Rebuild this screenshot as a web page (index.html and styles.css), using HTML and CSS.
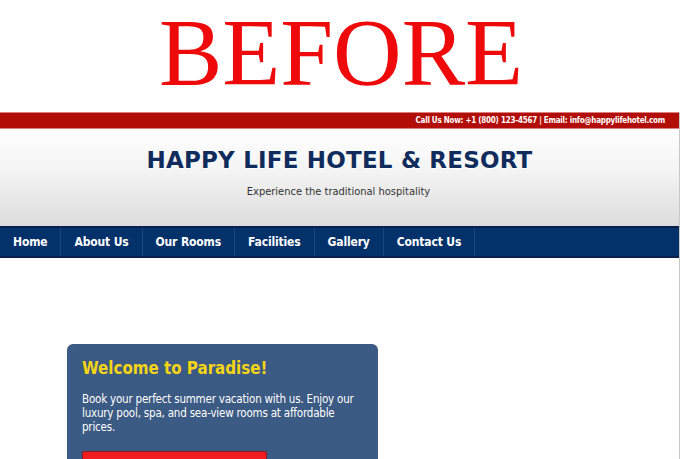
FILE: index.html
```html
<!DOCTYPE html>
<html>
<head>
<meta charset="utf-8">
<link rel="stylesheet" href="styles.css">
</head>
<body>
<div class="banner">BEFORE</div>
<div class="site">
  <div class="topbar">Call Us Now: +1 (800) 123-4567 | Email: info@happylifehotel.com</div>
  <header class="header">
    <h1 class="title">HAPPY LIFE HOTEL &amp; RESORT</h1>
    <p class="tagline">Experience the traditional hospitality</p>
  </header>
  <nav class="nav">
    <a class="nav-item">Home</a>
    <a class="nav-item">About Us</a>
    <a class="nav-item">Our Rooms</a>
    <a class="nav-item">Facilities</a>
    <a class="nav-item">Gallery</a>
    <a class="nav-item">Contact Us</a>
  </nav>
  <main class="content">
    <section class="card">
      <h2 class="card-title">Welcome to Paradise!</h2>
      <p class="card-text">Book your perfect summer vacation with us. Enjoy our luxury pool, spa, and sea-view rooms at affordable prices.</p>
      <div class="card-btn"></div>
    </section>
  </main>
</div>
</body>
</html>
```

FILE: styles.css
```css
html, body {
  margin: 0;
  padding: 0;
  background: #ffffff;
  overflow: hidden;
}
body {
  width: 680px;
  height: 459px;
  font-family: "DejaVu Sans", Verdana, sans-serif;
}
.banner {
  height: 112px;
  box-sizing: border-box;
  padding-top: 3px;
  text-align: center;
  font-family: "Liberation Serif", "Times New Roman", serif;
  font-size: 95px;
  line-height: 100px;
  color: #ee0a0a;
  padding-left: 2px;
}
.site {
  border-right: 1px solid #c8c8c8;
  height: 347px;
  box-sizing: border-box;
}
.topbar {
  height: 17px;
  background: #b30d08;
  border-top: 1px solid #d9817e;
  border-bottom: 1px solid #d9817e;
  box-sizing: border-box;
  color: #ffffff;
  font-family: "DejaVu Sans Condensed", "DejaVu Sans", sans-serif;
  font-size: 8px;
  font-weight: bold;
  line-height: 15px;
  text-align: right;
  padding-right: 14px;
  letter-spacing: -0.25px;
}
.header {
  height: 97px;
  box-sizing: border-box;
  background: linear-gradient(#ffffff 0%, #f3f3f3 45%, #dcdcdc 100%);
  text-align: center;
  padding-top: 16px;
}
.title {
  margin: 0;
  font-family: "DejaVu Sans", Verdana, sans-serif;
  font-weight: bold;
  font-size: 23px;
  line-height: 30px;
  color: #102c5c;
  letter-spacing: 0.2px;
  text-shadow: 0 1px 1px rgba(255,255,255,0.8);
}
.tagline {
  margin: 10px 0 0;
  font-family: "DejaVu Sans Condensed", "DejaVu Sans", sans-serif;
  font-size: 11px;
  line-height: 14px;
  color: #333333;
  padding-right: 2px;
}
.nav {
  display: flex;
  height: 32px;
  box-sizing: border-box;
  background: #03316a;
  border-top: 2px solid #0a1f4e;
  border-bottom: 2px solid #0a1f4e;
}
.nav-item {
  padding: 0 13px;
  border-right: 1px solid #1a4680;
  color: #ffffff;
  font-family: "DejaVu Sans Condensed", "DejaVu Sans", sans-serif;
  font-weight: bold;
  font-size: 12px;
  line-height: 29px;
  letter-spacing: -0.15px;
}
.content {
  padding: 86px 0 0 67px;
}
.card {
  width: 311px;
  height: 130px;
  box-sizing: border-box;
  background: #3b5a84;
  border-radius: 6px 6px 0 0;
  padding: 13px 10px 0 15px;
}
.card-title {
  margin: 0;
  color: #f6d514;
  font-family: "DejaVu Sans Condensed", "DejaVu Sans", sans-serif;
  font-weight: bold;
  font-size: 16.8px;
  line-height: 22px;
}
.card-text {
  margin: 13px 0 0;
  color: #ffffff;
  font-family: "DejaVu Sans Condensed", "DejaVu Sans", sans-serif;
  font-size: 11.5px;
  line-height: 14px;
  letter-spacing: -0.2px;
}
.card-btn {
  margin-top: 17px;
  width: 183px;
  height: 20px;
  background: #f21d1f;
  border: 1px solid #8a1a2a;
  border-radius: 2px;
}
```
